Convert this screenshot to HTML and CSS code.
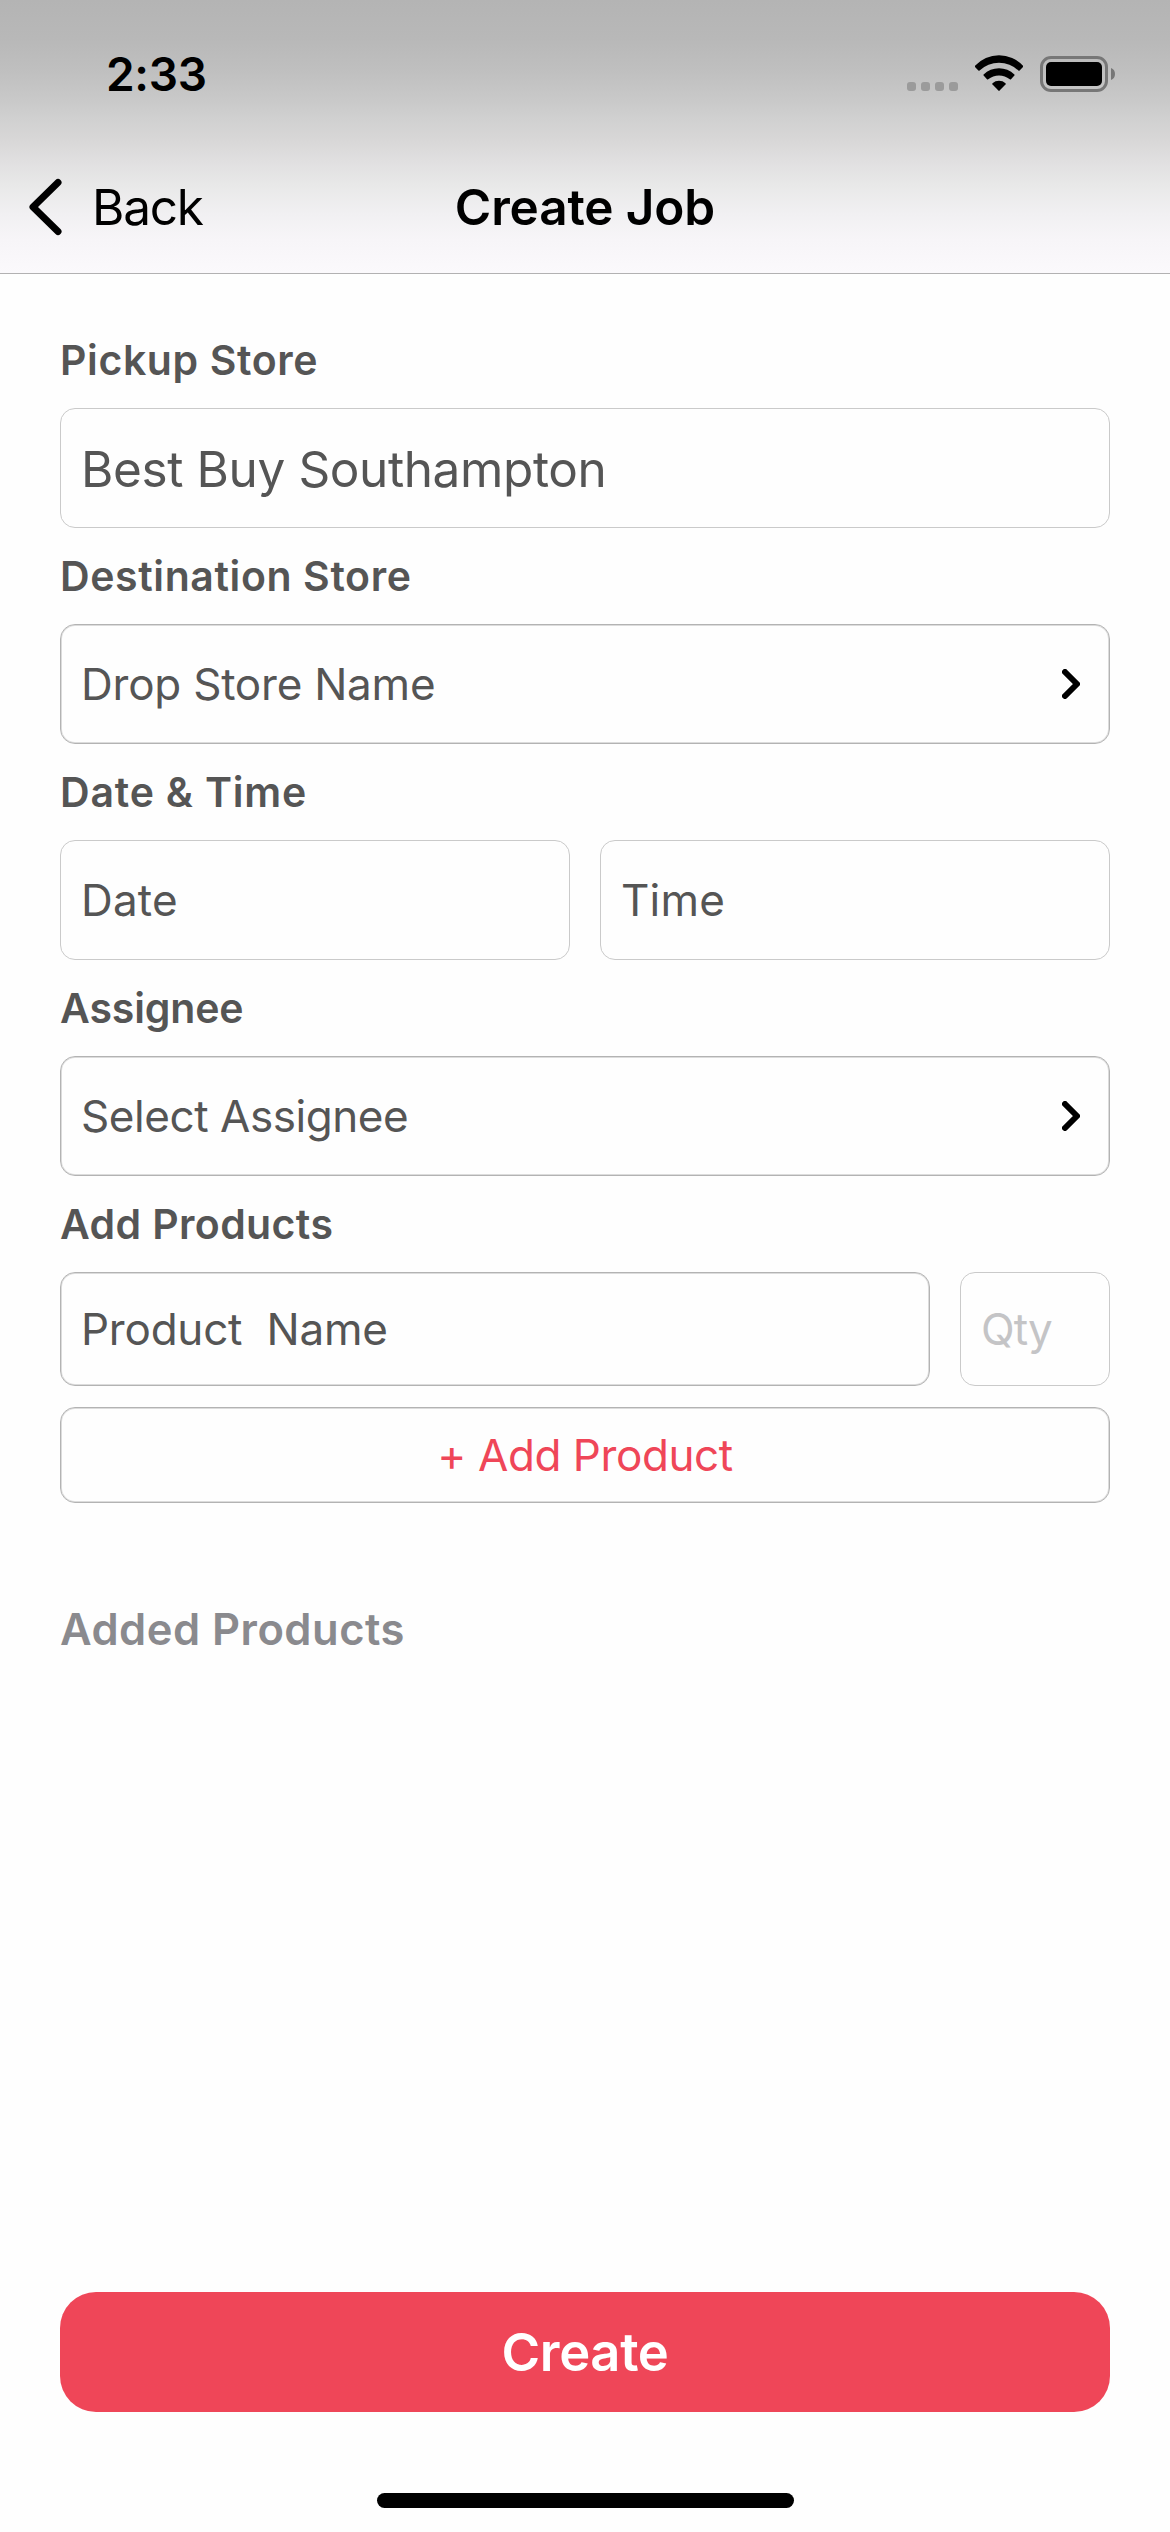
FILE: index.html
```
<!DOCTYPE html>
<html lang="en">
<head>
  <meta charset="utf-8">
  <title>Create Job</title>
  <link rel="stylesheet" href="styles.css">
</head>
<body>
  <div class="screen">
    <header class="header">
      <div class="status-bar">
        <span class="clock">2:33</span>
        <div class="status-icons">
          <svg width="51" height="37" viewBox="0 0 51 37" fill="#9b9b9b">
            <rect x="0" y="27" width="9" height="9" rx="3"/>
            <rect x="14" y="27" width="9" height="9" rx="3"/>
            <rect x="28" y="27" width="9" height="9" rx="3"/>
            <rect x="42" y="27" width="9" height="9" rx="3"/>
          </svg>
          <svg width="48" height="37" viewBox="0 0 48 37" fill="#000">
            <path d="M0 10.8A32.5 32.5 0 0 1 48 10.8Q48.5 11.3 48 11.9L44.6 15.6Q44 16.1 43.4 15.6A28 28 0 0 0 4.6 15.6Q4 16.1 3.4 15.6L0 11.9Q-.5 11.3 0 10.8Z"/>
            <path d="M8.6 19.4A22.3 22.3 0 0 1 39.4 19.4Q39.9 20 39.4 20.6L36 24.3Q35.400 24.800 34.800 24.300A17 17 0 0 0 13.2 24.3Q12.6 24.8 12 24.3L8.6 20.600Q8.100 20 8.600 19.400Z"/>
            <path d="M17.5 28.2A10 10 0 0 1 30.500 28.200Q31 28.800 30.500 29.400L24.600 35.600Q24 36.200 23.400 35.600L17.500 29.400Q17 28.800 17.500 28.200Z"/>
          </svg>
          <svg width="75" height="37" viewBox="0 0 75 37">
            <rect x="1.500" y="2.500" width="65" height="33" rx="9.500" fill="none" stroke="#777" stroke-width="3"/>
            <rect x="6" y="7" width="56" height="24" rx="5" fill="#000"/>
            <path d="M71 13Q75 14.500 75 19Q75 23.500 71 25Z" fill="#777"/>
          </svg>
        </div>
      </div>
      <nav class="nav-bar">
        <a class="back">
          <svg width="34" height="58" viewBox="0 0 34 58" fill="none" stroke="#000" stroke-width="7" stroke-linecap="round" stroke-linejoin="round">
            <path d="M30 4.500L5 29L30 53.500"/>
          </svg>
          <span>Back</span>
        </a>
        <h1 class="title">Create Job</h1>
      </nav>
    </header>

    <main class="form">
      <h2 class="label">Pickup Store</h2>
      <div class="field field-value">Best Buy Southampton</div>

      <h2 class="label">Destination Store</h2>
      <div class="field field-select">
        <span>Drop Store Name</span>
        <svg width="18" height="30" viewBox="0 0 18 30" fill="none" stroke="#000" stroke-width="6" stroke-linecap="round" stroke-linejoin="round">
          <path d="M3 3L15 15L3 27"/>
        </svg>
      </div>

      <h2 class="label label-date">Date &amp; Time</h2>
      <div class="date-row">
        <div class="field field-short">Date</div>
        <div class="field field-short">Time</div>
      </div>

      <h2 class="label label-tight">Assignee</h2>
      <div class="field field-select field-assignee">
        <span>Select Assignee</span>
        <svg width="18" height="30" viewBox="0 0 18 30" fill="none" stroke="#000" stroke-width="6" stroke-linecap="round" stroke-linejoin="round">
          <path d="M3 3L15 15L3 27"/>
        </svg>
      </div>

      <h2 class="label label-products">Add Products</h2>
      <div class="product-row">
        <div class="field field-select field-product">Product  Name</div>
        <div class="field field-qty">Qty</div>
      </div>
      <div class="field field-select add-product">+ Add Product</div>

      <h2 class="added-title">Added Products</h2>
    </main>

    <footer class="footer">
      <div class="create-button">Create</div>
      <div class="home-indicator"></div>
    </footer>
  </div>
</body>
</html>
```
FILE: styles.css
```
* {
  box-sizing: border-box;
}

body {
  margin: 0;
  background: #fefefe;
  color: #555;
  font-family: Inter, "Liberation Sans", sans-serif;
}

svg {
  display: block;
  flex: none;
}

.screen {
  display: flex;
  flex-direction: column;
  width: 1170px;
  height: 2532px;
}

/* Header */

.header {
  height: 274px;
  border-bottom: 1px solid #b2b1b2;
  background: linear-gradient(
    #b4b4b4 0,
    #b8b8b8 38px,
    #bfbfbf 70px,
    #c8c8c8 98px,
    #d0d0d0 118px,
    #d8d7d7 140px,
    #e1e0e1 163px,
    #e9e9e9 187px,
    #f1f0f2 214px,
    #f7f5f8 240px,
    #fbf9fc 273px
  );
  color: #000;
}

.status-bar {
  display: flex;
  align-items: center;
  justify-content: space-between;
  height: 148px;
  padding: 0 55px 0 106px;
}

.clock {
  font-size: 46px;
  font-weight: 600;
  letter-spacing: -0.3px;
}

.status-icons {
  display: flex;
  gap: 17px;
  padding-bottom: 1px;
}

.nav-bar {
  display: grid;
  grid-template-columns: 1fr auto 1fr;
  align-items: center;
  height: 118px;
  padding: 0 28px;
}

.back {
  display: flex;
  align-items: center;
  gap: 30px;
  font-size: 49.5px;
  letter-spacing: -1.2px;
}

.title {
  margin: 0;
  font-size: 49.5px;
  font-weight: 600;
  letter-spacing: -0.14px;
}

/* Form */

.form {
  flex: 1;
  padding: 38px 60px 0;
}

.label {
  margin: 0;
  font-size: 41px;
  font-weight: 600;
  line-height: 96px;
  letter-spacing: 0.61px;
}

.label-date {
  letter-spacing: 0.8px;
}

.label-tight {
  letter-spacing: -0.13px;
}

.label-products {
  letter-spacing: 0.38px;
}

.field {
  display: flex;
  align-items: center;
  justify-content: space-between;
  height: 120px;
  padding: 0 29px 0 20px;
  border: 1px solid #cacaca;
  border-radius: 15px;
  font-size: 44px;
  letter-spacing: -0.23px;
  white-space: pre;
}

.field-value {
  padding-top: 2px;
  font-size: 49.5px;
  letter-spacing: -0.39px;
}

.field-select {
  border-color: #b3b3b3;
  box-shadow: inset 0 0 0 1px #dcdcdc;
}

.field-short {
  letter-spacing: 0.19px;
}

.field-assignee {
  letter-spacing: -0.44px;
}

.date-row {
  display: grid;
  grid-template-columns: 1fr 1fr;
  gap: 30px;
}

.product-row {
  display: grid;
  grid-template-columns: 1fr 150px;
  gap: 30px;
  margin-bottom: 21px;
}

.field-product,
.field-qty {
  height: 114px;
}

.field-qty {
  color: #c4c4c6;
  letter-spacing: -0.95px;
}

.add-product {
  justify-content: center;
  height: 96px;
  padding: 0;
  color: #ef4658;
  letter-spacing: -0.43px;
}

.added-title {
  margin: 78px 0 0;
  color: #8a8a8e;
  font-size: 43.5px;
  font-weight: 600;
  line-height: 96px;
  letter-spacing: 0.49px;
}

/* Footer */

.footer {
  display: flex;
  flex-direction: column;
  align-items: center;
  gap: 81px;
  padding: 0 60px 24px;
}

.create-button {
  display: flex;
  align-items: center;
  justify-content: center;
  align-self: stretch;
  height: 120px;
  border-radius: 36px;
  background: #ef4658;
  color: #fff;
  font-size: 52.5px;
  font-weight: 600;
  letter-spacing: -0.34px;
}

.home-indicator {
  width: 417px;
  height: 15px;
  border-radius: 8px;
  background: #000;
}
```
